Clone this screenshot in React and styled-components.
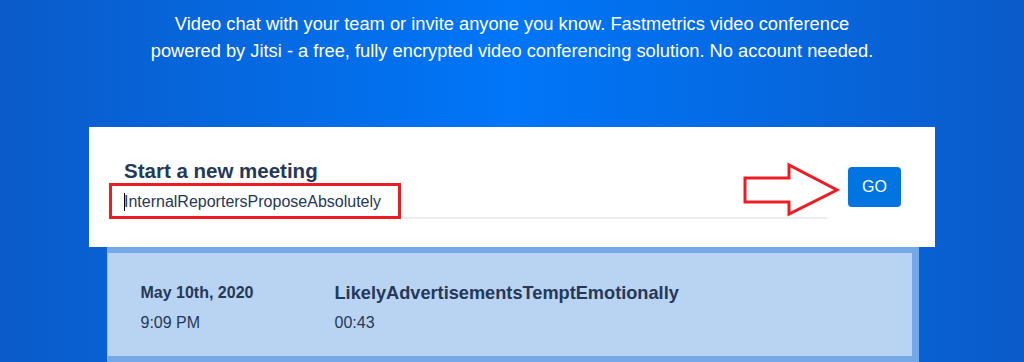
import React from "react";
import styled, { createGlobalStyle } from "styled-components";

const Global = createGlobalStyle`
  html, body { margin: 0; padding: 0; }
  body {
    font-family: "Liberation Sans", Arial, sans-serif;
    background: #0b5cc9;
    overflow: hidden;
  }
`;

const Page = styled.div`
  width: 1024px;
  height: 362px;
  overflow: hidden;
  background: linear-gradient(90deg, #0b5bc9 0%, #0076f8 50%, #0b5bc9 100%);
  display: flex;
  flex-direction: column;
  align-items: center;
`;

const Description = styled.p`
  margin: 10px 0 63px;
  text-align: center;
  color: #ffffff;
  font-size: 18.3px;
  line-height: 27px;
  white-space: nowrap;
`;

const EnterCard = styled.div`
  position: relative;
  box-sizing: border-box;
  width: 846px;
  height: 120px;
  background: #ffffff;
  padding: 32px 34px 28px 35px;
  display: flex;
  gap: 21px;
`;

const EnterColumn = styled.div`
  flex: 1;
  display: flex;
  flex-direction: column;
`;

const CardTitle = styled.div`
  font-size: 20.5px;
  line-height: 24px;
  font-weight: bold;
  color: #253858;
`;

const MeetingInput = styled.div`
  box-sizing: border-box;
  height: 36px;
  padding-top: 3px;
  border-bottom: 2px solid #ebedf1;
  display: flex;
  align-items: center;
  font-size: 16px;
  color: #253858;
`;

const Caret = styled.span`
  display: inline-block;
  width: 1px;
  height: 18px;
  background: #000;
  margin-right: -1px;
`;

const GoButton = styled.button`
  align-self: flex-end;
  margin-bottom: 12px;
  width: 53px;
  height: 40px;
  border: none;
  border-radius: 4px;
  background: #0074e0;
  color: #ffffff;
  font-family: "Liberation Sans", Arial, sans-serif;
  font-size: 16px;
  padding: 0;
`;

const Highlight = styled.div`
  position: absolute;
  left: 20px;
  top: 56px;
  width: 292px;
  height: 36px;
  box-sizing: border-box;
  border: 3px solid #ed1c24;
`;

const ArrowMark = styled.svg`
  position: absolute;
  left: 651px;
  top: 33px;
`;

const RecentPanel = styled.div`
  box-sizing: border-box;
  width: 812px;
  margin-left: 1px;
  flex: 1;
  background: #b9d3f2;
  border-top: 6px solid #76a8e8;
  border-right: 7px solid #76a8e8;
  border-left: 1px solid #8fb8ec;
  border-bottom: 6px solid #76a8e8;
`;

const MeetingRow = styled.div`
  display: grid;
  grid-template-columns: 194px 1fr;
  padding: 29px 0 0 33px;
`;

const Cell = styled.div`
  display: flex;
  flex-direction: column;
  gap: 9px;
  color: #253858;
`;

const Primary = styled.div`
  font-weight: bold;
  font-size: ${(p) => (p.$large ? "18.2px" : "16px")};
  line-height: 22px;
`;

const Secondary = styled.div`
  font-size: 16px;
  line-height: 20px;
`;

export default function App() {
  return (
    <>
      <Global />
      <Page>
        <Description>
          Video chat with your team or invite anyone you know. Fastmetrics video conference
          <br />
          powered by Jitsi - a free, fully encrypted video conferencing solution. No account needed.
        </Description>
        <EnterCard>
          <EnterColumn>
            <CardTitle>Start a new meeting</CardTitle>
            <MeetingInput>
              <Caret />
              InternalReportersProposeAbsolutely
            </MeetingInput>
          </EnterColumn>
          <GoButton>GO</GoButton>
          <Highlight />
          <ArrowMark width="102" height="60" viewBox="0 0 102 60">
            <path
              d="M5 18 L49 18 L49 5 L97 30 L49 54 L49 42 L5 42 Z"
              fill="none"
              stroke="#ed1c24"
              strokeWidth="3"
              strokeLinejoin="miter"
            />
          </ArrowMark>
        </EnterCard>
        <RecentPanel>
          <MeetingRow>
            <Cell>
              <Primary>May 10th, 2020</Primary>
              <Secondary>9:09 PM</Secondary>
            </Cell>
            <Cell>
              <Primary $large>LikelyAdvertisementsTemptEmotionally</Primary>
              <Secondary>00:43</Secondary>
            </Cell>
          </MeetingRow>
        </RecentPanel>
      </Page>
    </>
  );
}
